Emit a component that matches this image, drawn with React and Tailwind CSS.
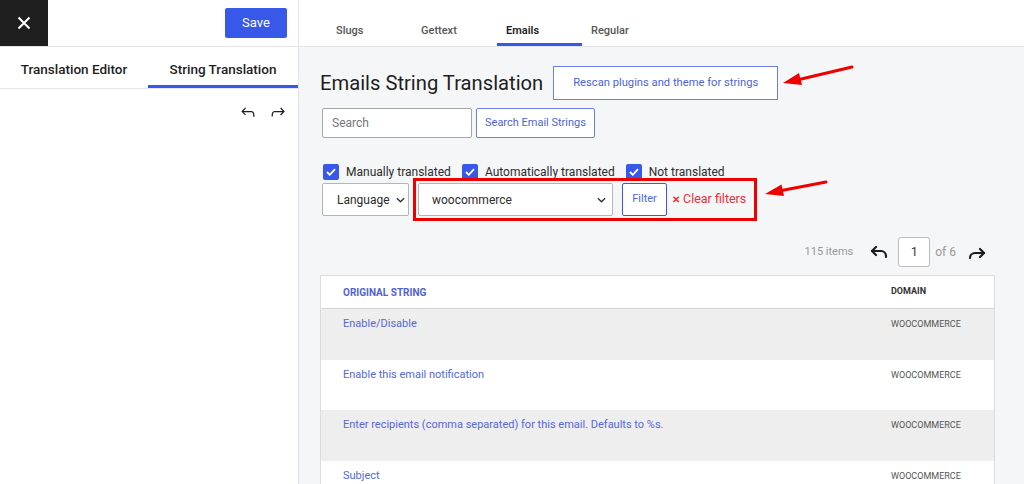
import React from 'react';

const UndoIcon = ({ className }) => (
  <svg viewBox="0 0 24 24" className={className} fill="currentColor">
    <path d="M18.3 11.7c-.6-.6-1.4-.9-2.3-.9H6.7l2.9-3.3-1.1-1-4.5 5L8.5 16l1-1-2.7-2.7H16c.5 0 .9.2 1.3.5 1 1 1 3.4 1 4.5v.3h1.5v-.2c0-1.5 0-4.300-1.5-5.7z" />
  </svg>
);

const RedoIcon = ({ className }) => (
  <svg viewBox="0 0 24 24" className={className} fill="currentColor">
    <path d="M15.6 6.5l-1.1 1 2.9 3.3H8c-.9 0-1.7.3-2.3.9-1.4 1.5-1.4 4.2-1.4 5.6v.2h1.5v-.3c0-1.1 0-3.5 1-4.5.3-.3.7-.5 1.3-.5h9.2L14.5 15l1.1 1.1 4.6-4.6-4.6-5z" />
  </svg>
);

const BoldUndo = () => (
  <svg width="20" height="16" viewBox="0 0 20 16" fill="none" stroke="#1e1e1e" strokeWidth="2.2" strokeLinecap="round" strokeLinejoin="round">
    <path d="M7 3 3 7l4 4" />
    <path d="M3 7h9a5 5 0 0 1 5 5v1" />
  </svg>
);

const BoldRedo = () => (
  <svg width="20" height="16" viewBox="0 0 20 16" fill="none" stroke="#1e1e1e" strokeWidth="2.2" strokeLinecap="round" strokeLinejoin="round">
    <path d="M13 5l4 4-4 4" />
    <path d="M17 9H8a5 5 0 0 0-5 5" />
  </svg>
);

const Chevron = () => (
  <svg width="9" height="6" viewBox="0 0 10 6" fill="none" stroke="#333" strokeWidth="1.5">
    <path d="M1 1l4 4 4-4" />
  </svg>
);

const Check = ({ label }) => (
  <label className="flex items-center gap-[7px] text-[12px] text-[#2c2c2c]">
    <span className="w-4 h-4 rounded-[2px] bg-[#3858e9] flex items-center justify-center">
      <svg width="10" height="8" viewBox="0 0 10 8" fill="none" stroke="white" strokeWidth="1.8">
        <path d="M1 4l2.8 2.8L9 1.2" />
      </svg>
    </span>
    {label}
  </label>
);

const App = () => {
  const rows = [
    "Enable/Disable",
    "Enable this email notification",
    "Enter recipients (comma separated) for this email. Defaults to %s.",
    "Subject",
  ];

  return (
    <div className="relative w-[1024px] h-[484px] overflow-hidden flex font-['Roboto',sans-serif]">
      {/* sidebar */}
      <div className="w-[299px] shrink-0 bg-white border-r border-[#e2e4e7]">
        <div className="h-[47px] flex items-center justify-between border-b border-[#e2e4e7]">
          <div className="w-12 h-[46px] bg-[#1e1e1e] flex items-center justify-center">
            <svg width="14" height="14" viewBox="0 0 14 14" stroke="white" strokeWidth="2">
              <path d="M1.5 1.5l11 11M12.5 1.5l-11 11" />
            </svg>
          </div>
          <button className="mr-[11px] w-[62px] h-[30px] rounded-[2px] bg-[#3858e9] text-white text-[13px]">Save</button>
        </div>
        <div className="flex h-[42px] border-b border-[#e2e4e7]">
          <div className="w-[148px] flex justify-center pt-[14px] text-[13.5px] leading-[16px] font-medium text-[#1e1e1e]">Translation Editor</div>
          <div className="flex-1 flex justify-center pt-[14px] text-[13.5px] leading-[16px] font-medium text-[#1e1e1e] border-b-[3px] border-[#3858e9]">String Translation</div>
        </div>
        <div className="flex justify-end gap-[10px] pr-[10px] pt-[13px] text-[#1e1e1e]">
          <UndoIcon className="w-5 h-5" />
          <RedoIcon className="w-5 h-5" />
        </div>
      </div>

      {/* main */}
      <div className="flex-1 bg-[#f5f6f7]">
        <div className="h-[47px] bg-white border-b border-[#e2e4e7] flex pl-[28px]">
          {["Slugs", "Gettext", "Emails", "Regular"].map((t) => (
            <div
              key={t}
              className={`w-[85px] pl-[9px] pt-[23px] text-[11px] ${t === "Emails" ? "font-semibold text-[#1e1e1e] border-b-[3px] border-[#3858e9]" : "font-medium text-[#555]"}`}
            >
              {t}
            </div>
          ))}
        </div>

        <div className="pl-[21px] pr-[29px]">
          <div className="flex items-center gap-[10px] mt-[19px]">
            <h1 className="text-[20.2px] text-[#1e1e1e]">Emails String Translation</h1>
            <button className="w-[225px] h-[34px] bg-white border border-[#6f7fe0] text-[11.2px] text-[#4f63d8]">Rescan plugins and theme for strings</button>
          </div>

          <div className="flex items-center gap-[4px] mt-[8px] ml-[2px]">
            <div className="w-[150px] h-[30px] bg-white border border-[#a7a7a7] rounded-[2px] pl-[9px] flex items-center text-[12px] text-[#777]">Search</div>
            <button className="w-[119px] h-[30px] bg-white border border-[#6f7fe0] rounded-[2px] text-[11px] text-[#4f63d8]">Search Email Strings</button>
          </div>

          <div className="flex items-center gap-[11px] mt-[25px] ml-[3px]">
            <Check label="Manually translated" />
            <Check label="Automatically translated" />
            <Check label="Not translated" />
          </div>

          <div className="flex items-center gap-[4px] -mt-[3px] ml-[2px]">
            <div className="w-[87px] h-[33px] bg-white border border-[#b5b5b5] rounded-[2px] flex items-center gap-[6px] pl-[14px] text-[12px] text-[#2c2c2c]">
              Language <Chevron />
            </div>
            <div className="flex items-center border-[3px] border-[#ee0000] p-[2px] pr-[8px]">
              <div className="w-[195px] h-[33px] bg-white border border-[#b5b5b5] rounded-[2px] flex items-center justify-between pl-[13px] pr-[6px] text-[12px] text-[#2c2c2c]">
                woocommerce <Chevron />
              </div>
              <button className="ml-[9px] w-[45px] h-[33px] bg-white border-[1.5px] border-[#3858e9] rounded-[2px] text-[11px] text-[#4f63d8]">Filter</button>
              <span className="ml-[5px] flex items-center gap-[3px] text-[12.5px] text-[#e8303a]">
                <span className="text-[10px] font-bold">✕</span>Clear filters
              </span>
            </div>
          </div>

          <div className="flex items-center justify-end mt-[16px] pr-[8px] text-[11px] text-[#999]">
            <span>115 items</span>
            <span className="ml-[16px]"><BoldUndo /></span>
            <div className="ml-[9px] w-[32px] h-[30px] bg-white border border-[#bbb] rounded-[3px] flex items-center justify-center text-[12px] text-[#333]">1</div>
            <span className="ml-[5px] text-[12px]">of 6</span>
            <span className="ml-[11px]"><BoldRedo /></span>
          </div>

          <div className="mt-[8px] border border-[#dcdcdc] bg-white">
            <div className="h-[33px] flex items-center border-b border-[#d5d5d5]">
              <div className="flex-1 pl-[22px] text-[10px] font-bold text-[#4f63d8]">ORIGINAL STRING</div>
              <div className="w-[103px] text-[9px] font-bold text-[#333]">DOMAIN</div>
            </div>
            {rows.map((r, i) => (
              <div key={i} className={`h-[50.5px] flex pt-[8px] ${i % 2 === 0 ? "bg-[#eeeeee]" : "bg-white"}`}>
                <div className="flex-1 pl-[22px] text-[11px] leading-[14px] text-[#5468d8]">{r}</div>
                <div className="w-[103px] text-[9px] leading-[14px] text-[#555]">WOOCOMMERCE</div>
              </div>
            ))}
          </div>
        </div>
      </div>

      {/* annotation arrows */}
      <svg className="absolute inset-0 pointer-events-none" width="1024" height="484">
        <line x1="852" y1="67" x2="797" y2="80" stroke="#ee0000" strokeWidth="3" strokeLinecap="round" />
        <polygon points="783,83 802,85 799,73" fill="#ee0000" />
        <line x1="826" y1="182" x2="779" y2="191" stroke="#ee0000" strokeWidth="3" strokeLinecap="round" />
        <polygon points="765,194 784,196 781.5,184.6" fill="#ee0000" />
      </svg>
    </div>
  );
};

export default App;
